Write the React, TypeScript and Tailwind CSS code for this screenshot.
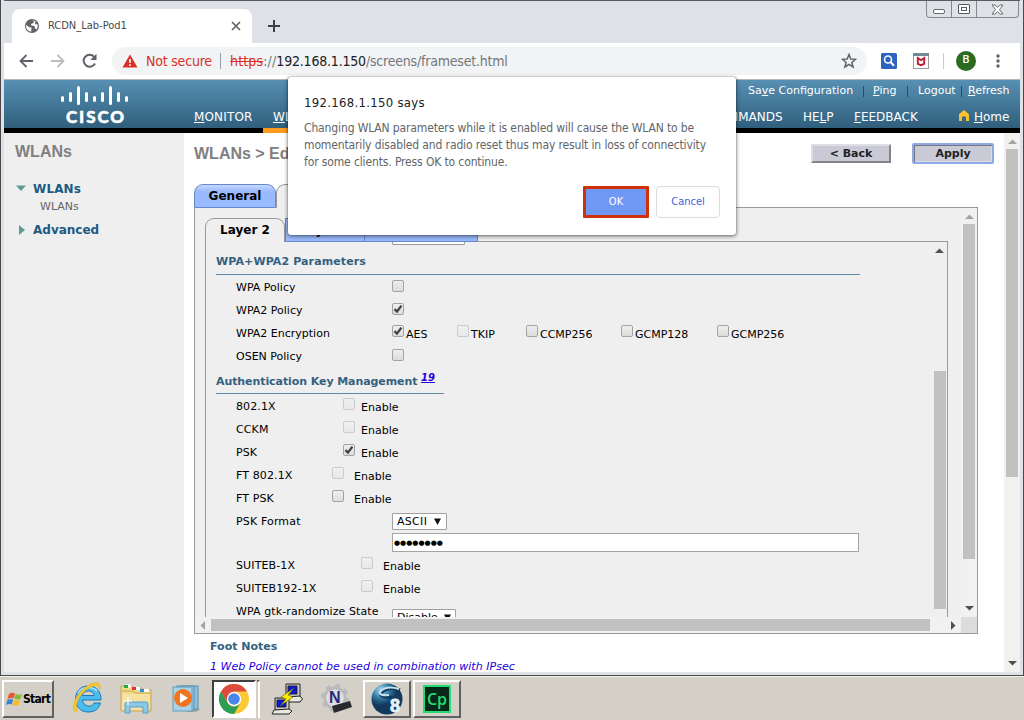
import React from "react";

const bars = [
  [61, 96, 6], [69, 92, 10], [77, 86, 19], [85, 92, 10], [93, 96, 6], [101, 92, 10], [109, 86, 19], [117, 92, 10], [125, 96, 6],
];

function Arrow({ dir, dark }: { dir: "up" | "down" | "left" | "right"; dark?: boolean }) {
  const points = {
    up: "0,6 4.5,1.5 9,6",
    down: "0,2 9,2 4.5,6.5",
    left: "6,0 1.5,4.5 6,9",
    right: "2,0 6.5,4.5 2,9",
  }[dir];
  return (
    <svg width="9" height="9" viewBox="0 0 9 9" className="block shrink-0">
      <polygon points={points} fill={dark ? "#505050" : "#a3a3a3"} />
    </svg>
  );
}

function Check({ on, off }: { on?: boolean; off?: boolean }) {
  return (
    <span
      className={
        "flex h-[12px] w-[12px] shrink-0 items-center justify-center rounded-[2px] border bg-linear-to-b " +
        (off ? "border-[#cbcbcb] from-[#f0f0f0] to-[#e8e8e8]" : "border-[#a3a3a3] from-[#eeeeee] to-[#dcdcdc]")
      }
    >
      {on && (
        <svg width="10" height="10" viewBox="0 0 10 10" className="shrink-0">
          <path d="M1.5 5.2 L4 7.6 L8.4 1.6" fill="none" stroke="#404040" strokeWidth="2.3" />
        </svg>
      )}
    </span>
  );
}

function PolicyRow({ label, on }: { label: string; on?: boolean }) {
  return (
    <div className="flex h-[23px] items-center pl-[20px]">
      <span className="w-[156px]">{label}</span>
      <span className="pb-[3px]"><Check on={on} /></span>
    </div>
  );
}

function Cipher({ label, on, off, width }: { label: string; on?: boolean; off?: boolean; width: string }) {
  return (
    <span className={"flex items-center " + width}>
      <span className="pb-[5px]"><Check on={on} off={off} /></span>
      <span className="pt-[2px] pl-[2px]">{label}</span>
    </span>
  );
}

function KeyRow({ label, on, off, col, gap }: { label: string; on?: boolean; off?: boolean; col: string; gap: string }) {
  return (
    <div className="flex h-[23px] items-center pl-[20px]">
      <span className={"tracking-[0.12px] whitespace-nowrap " + col}>{label}</span>
      <span className="pb-[6px]"><Check on={on} off={off} /></span>
      <span className={"pt-[2px] " + gap}>Enable</span>
    </div>
  );
}

function TabStrip() {
  return (
    <div className="flex h-[43px] shrink-0 border-t border-[#5a5a5e] bg-[#dee1e6] pl-[8px]">
      <div className="mt-[8px] flex h-[34px] w-[240px] items-center rounded-t-[8px] bg-white pr-[10px] pl-[13px]">
        <svg width="14" height="14" viewBox="0 0 14 14">
          <circle cx="7" cy="7" r="7" fill="#5f6368" />
          <path d="M1.2 6 L4.2 8.2 L6.5 8.6 L6.2 12.8 A5.7 5.7 0 0 1 1.2 6 Z M6 2 L9 1.8 L8.5 4 L6 5 L6.3 6.5 L9.5 7 L10 9.5 L11.5 10.4 A5.5 5.5 0 0 0 12.3 5 L10.5 5.4 L9.8 4 L11 3 L9.2 1.8 Z" fill="#fff" />
        </svg>
        <span className="mt-px ml-[9px] flex-1 font-['DejaVu_Sans_Condensed','DejaVu_Sans',sans-serif] text-[11px] text-[#45494d]">RCDN_Lab-Pod1</span>
        <svg width="12" height="12" viewBox="0 0 12 12"><path d="M2 2 L10 10 M10 2 L2 10" stroke="#5f6368" strokeWidth="1.7" /></svg>
      </div>
      <svg width="12" height="12" viewBox="0 0 12 12" className="mt-[19px] ml-[16px]"><path d="M6 0 V12 M0 6 H12" stroke="#3c4043" strokeWidth="2" /></svg>
      <div className="flex-1" />
      <div className="mr-[1px] flex h-[17px] w-[93px] rounded-b-[4px] border border-t-0 border-[#85888c]">
        <div className="flex w-[25px] items-center justify-center border-r border-[#85888c] pt-[4px]"><span className="h-[5px] w-[12px] rounded-[2px] border border-[#66696d] bg-white" /></div>
        <div className="flex w-[25px] items-center justify-center border-r border-[#85888c]"><span className="flex h-[10px] w-[12px] items-center justify-center rounded-[1px] border border-[#55585c] bg-white"><span className="h-[4px] w-[6px] border border-[#55585c]" /></span></div>
        <div className="flex flex-1 items-center justify-center">
          <svg width="13" height="11" viewBox="0 0 13 11"><path d="M1 1 H4.2 L6.5 3.4 L8.8 1 H12 L8.5 5.5 L12 10 H8.8 L6.5 7.6 L4.2 10 H1 L4.5 5.5 Z" fill="#fff" stroke="#66696d" strokeWidth="1" /></svg>
        </div>
      </div>
    </div>
  );
}

function Toolbar() {
  return (
    <div className="flex h-[37px] shrink-0 items-center border-b border-[#b6b4b6] bg-white pb-[1px] font-['DejaVu_Sans_Condensed','DejaVu_Sans',sans-serif] text-[14px]">
      <svg width="14" height="14" viewBox="0 0 14 14" className="ml-[15px]"><path d="M14 7 H1.5 M7.5 1 L1.5 7 L7.5 13" fill="none" stroke="#5f6368" strokeWidth="1.8" /></svg>
      <svg width="14" height="14" viewBox="0 0 14 14" className="ml-[18px]"><path d="M0 7 H12.5 M6.5 1 L12.5 7 L6.5 13" fill="none" stroke="#babcbe" strokeWidth="1.8" /></svg>
      <svg width="16" height="16" viewBox="0 0 16 16" className="ml-[17px]"><path d="M13 10.5 A6 6 0 1 1 12.2 3.8" fill="none" stroke="#5f6368" strokeWidth="2" /><path d="M14.5 0.8 V7 H8.3 Z" fill="#5f6368" /></svg>
      <div className="ml-[14px] flex h-[28px] w-[755px] items-center rounded-full bg-[#f1f3f4] pl-[10px]">
        <svg width="16" height="14" viewBox="0 0 16 14" className="shrink-0"><path d="M8 0.5 L15.5 13.5 H0.5 Z" fill="#d93025" /><path d="M8 5 V9 M8 10.3 V12" stroke="#fff" strokeWidth="1.6" /></svg>
        <span className="mt-px ml-[8px] w-[74px] whitespace-nowrap tracking-[-0.2px] text-[#d93025]">Not secure</span>
        <span className="h-[16px] w-px bg-[#9aa0a6]" />
        <span className="mt-px ml-[9px] flex-1 whitespace-nowrap tracking-[-0.2px] text-[#73777b]"><span className="tracking-[0.15px] text-[#d93025] line-through">https</span><span className="tracking-[0.15px]">://</span><span className="text-[#202124]">192.168.1.150</span>/screens/frameset.html</span>
        <svg width="16" height="16" viewBox="0 0 16 16" className="mr-[10px]"><path d="M8 1.5 L9.8 6 L14.6 6.3 L10.9 9.4 L12.1 14 L8 11.4 L3.9 14 L5.1 9.4 L1.4 6.3 L6.2 6 Z" fill="none" stroke="#5f6368" strokeWidth="1.5" /></svg>
      </div>
      <svg width="16" height="16" viewBox="0 0 16 16" className="ml-[14px]"><rect width="16" height="16" rx="1.5" fill="#2c62c0" /><circle cx="7" cy="6.5" r="3.5" fill="none" stroke="#fff" strokeWidth="1.6" /><path d="M9.5 9 L13 12.8" stroke="#fff" strokeWidth="2" /></svg>
      <svg width="16" height="16" viewBox="0 0 16 16" className="ml-[16px]"><rect x=".5" y=".5" width="15" height="15" fill="#fff" stroke="#959ba0" /><path d="M0 0 H16 V3 H0 Z" fill="#718a98" /><path d="M4.8 5 V10.8 L8 12.2 L11.2 10.8 V5 L8 7.2 Z" fill="none" stroke="#c01830" strokeWidth="1.9" /></svg>
      <span className="ml-[14px] h-[16px] w-px bg-[#c8cacc]" />
      <span className="ml-[12px] flex h-[20px] w-[20px] items-center justify-center rounded-full bg-[#2a6b22] font-['Roboto',sans-serif] text-[11px] font-medium text-white">B</span>
      <svg width="4" height="14" viewBox="0 0 4 14" className="ml-[20px]"><g fill="#5f6368"><circle cx="2" cy="2" r="1.7" /><circle cx="2" cy="7" r="1.7" /><circle cx="2" cy="12" r="1.7" /></g></svg>
    </div>
  );
}

function Header() {
  return (
    <>
      <div className="flex h-[48px] shrink-0 bg-linear-to-b from-[#5790b3] to-[#305f7c] text-[12px] text-white">
        <svg width="190" height="48" viewBox="4 80 190 48" className="shrink-0">
          {bars.map(([x, y, h]) => <rect key={x} x={x} y={y} width="3" height={h} rx="1.5" fill="#fff" />)}
          <text x="66" y="123" fontFamily="Lato, sans-serif" fontWeight="900" fontSize="17" textLength="58" fill="#fff" stroke="#fff" strokeWidth=".5">CISCO</text>
        </svg>
        <div className="flex items-end pb-[2px]">
          <span className="w-[79px] tracking-[0.15px]"><u>M</u>ONITOR</span>
          <span><u>W</u>LANs</span>
        </div>
        <div className="flex flex-1 flex-col items-end pr-[10px]">
          <div className="flex h-[22px] items-center pt-px text-[11px] whitespace-nowrap">
            <span className="w-[106px]">Sa<u>v</u>e Configuration</span>
            <span className="mr-[9px] ml-[9px] h-[11px] w-px bg-[#234b78]" />
            <span className="w-[25px]"><u>P</u>ing</span>
            <span className="mr-[10px] ml-[9px] h-[11px] w-px bg-[#234b78]" />
            <span className="w-[38px]">Logout</span>
            <span className="mr-[6px] ml-[5px] h-[11px] w-px bg-[#234b78]" />
            <span className="w-[42px]"><u>R</u>efresh</span>
          </div>
          <div className="mt-[6px] flex items-center whitespace-nowrap">
            <span className="w-[93px]">C<u>O</u>MMANDS</span>
            <span className="w-[51px]">HE<u>L</u>P</span>
            <span className="w-[105px]"><u>F</u>EEDBACK</span>
            <svg width="10" height="12" viewBox="0 0 10 12" className="mr-[5px] mb-[2px]"><path d="M0 11 V4.5 Q0 4 5 0 Q10 4 10 4.5 V11 H7 V7 Q5 5.4 3 7 V11 Z" fill="#fbc02d" /></svg>
            <span className="w-[36px]"><u>H</u>ome</span>
          </div>
        </div>
      </div>
      <div className="flex h-[5px] shrink-0 bg-black"><span className="ml-[259px] h-full w-[60px] bg-[#ff9a1e]" /></div>
    </>
  );
}

function Sidebar() {
  return (
    <div className="w-[180px] shrink-0 bg-[#efefef] pl-[11px]">
      <h2 className="mt-[9px] font-['Liberation_Sans',Arial,sans-serif] text-[16px] leading-[20px] font-bold text-[#808080]">WLANs</h2>
      <div className="mt-[16px] flex h-[20px] items-center text-[12px] font-bold text-[#1c5a83]">
        <svg width="12" height="8" viewBox="0 0 12 8"><path d="M1 1.5 H11 L6 7 Z" fill="#5f9a96" /></svg>
        <span className="mt-px ml-[6px] tracking-[0.15px]">WLANs</span>
      </div>
      <div className="flex h-[17px] items-center pt-px pl-[25px] text-[11px] text-[#666666]">WLANs</div>
      <div className="mt-[5px] flex h-[20px] items-center text-[12px] font-bold text-[#1c5a83]">
        <svg width="12" height="12" viewBox="0 0 12 12"><path d="M4 1 V11 L10 6 Z" fill="#5f9a96" /></svg>
        <span className="ml-[6px]">Advanced</span>
      </div>
    </div>
  );
}

function SecurityForm() {
  return (
    <div className="h-[375px] w-[726px] overflow-hidden pl-[10px] text-[11px] leading-[14px] text-black">
      <div className="ml-[176px] h-[3px] w-[73px] rounded-b-[2px] border border-t-0 border-[#999] bg-white" />
      <div className="mt-[6px] flex h-[24px] w-[644px] items-center border-b border-[#5e8ba6] pb-[2px] font-bold tracking-[0.12px] text-[#336180]">WPA+WPA2 Parameters</div>
      <div className="h-px" />
      <PolicyRow label="WPA Policy" />
      <PolicyRow label="WPA2 Policy" on />
      <div className="flex h-[23px] items-center pl-[20px] whitespace-nowrap">
        <span className="w-[156px]">WPA2 Encryption</span>
        <Cipher label="AES" on width="w-[65px]" />
        <Cipher label="TKIP" off width="w-[69px]" />
        <Cipher label="CCMP256" width="w-[95px]" />
        <Cipher label="GCMP128" width="w-[96px]" />
        <Cipher label="GCMP256" width="w-[90px]" />
      </div>
      <PolicyRow label="OSEN Policy" />
      <div className="flex h-[26px] w-[228px] items-center border-b border-[#5e8ba6] pt-[2px] font-bold whitespace-nowrap text-[#336180]">
        <span className="w-[205px] tracking-[-0.08px]">Authentication Key Management</span>
        <i className="pb-[7px] text-[10px] text-[#2200dd] underline">19</i>
      </div>
      <div className="h-px" />
      <KeyRow label="802.1X" off col="w-[107px]" gap="pl-[6px]" />
      <KeyRow label="CCKM" off col="w-[107px]" gap="pl-[6px]" />
      <KeyRow label="PSK" on col="w-[107px]" gap="pl-[6px]" />
      <KeyRow label="FT 802.1X" off col="w-[96px]" gap="pl-[10px]" />
      <KeyRow label="FT PSK" col="w-[96px]" gap="pl-[10px]" />
      <div className="flex h-[23px] items-center pl-[20px]">
        <span className="w-[156px] tracking-[0.15px]">PSK Format</span>
        <span className="flex h-[17px] w-[55px] items-center justify-between rounded-[1px] border border-[#a0a0a0] bg-white pr-[5px] pl-[4px] tracking-[0.3px]">
          ASCII
          <svg width="7" height="8" viewBox="0 0 7 8"><path d="M0 0.5 H7 L3.5 7 Z" fill="#111" /></svg>
        </span>
      </div>
      <div className="ml-[176px] flex h-[19px] w-[467px] items-center border border-[#a5a5a5] bg-white pl-[1px] text-[7px]">●●●●●●●●</div>
      <div className="h-[2px]" />
      <KeyRow label="SUITEB-1X" off col="w-[125px]" gap="pl-[10px]" />
      <KeyRow label="SUITEB192-1X" off col="w-[125px]" gap="pl-[10px]" />
      <div className="flex h-[30px] items-start pl-[20px]">
        <span className="w-[156px] pt-[5px] tracking-[0.1px] whitespace-nowrap">WPA gtk-randomize State</span>
        <span className="mt-[9px] flex h-[17px] w-[64px] items-center justify-between rounded-[1px] border border-[#a0a0a0] bg-white pr-[4px] pl-[4px]">
          Disable
          <svg width="7" height="8" viewBox="0 0 7 8"><path d="M0 0.5 H7 L3.5 7 Z" fill="#111" /></svg>
        </span>
      </div>
    </div>
  );
}

function MainPane() {
  return (
    <div className="flex w-[820px] shrink-0 flex-col bg-white pl-[10px]">
      <div className="flex h-[40px] shrink-0 items-center">
        <h1 className="mt-px flex-1 font-['Liberation_Sans',Arial,sans-serif] text-[16px] font-bold text-[#808080]">WLANs &gt; Edit</h1>
        <span className="mt-[1px] flex h-[19px] w-[80px] items-center justify-center border-2 border-t-[#dedee4] border-r-[#84848a] border-b-[#84848a] border-l-[#dedee4] bg-[#cacad6] pt-px text-[11px] font-bold text-[#222]">&lt; Back</span>
        <span className="mt-[1px] mr-[10px] ml-[21px] flex h-[21px] w-[82px] items-center justify-center rounded-[2px] border-2 border-[#8fa9e8] bg-[#cacad6] pt-px text-[11px] font-bold text-[#222] shadow-[inset_1px_1px_0_#777,inset_-1px_-1px_0_#dedee4]">Apply</span>
      </div>
      <div className="mt-[11px] flex h-[24px] shrink-0">
        <span className="flex w-[82px] items-center justify-center rounded-t-[9px] border border-[#6488cc] bg-linear-to-b from-[#c5d8ff] via-[#9abaff] via-30% to-[#9abaff] text-[12px] font-bold text-black">General</span>
        <span className="w-[84px] rounded-t-[9px] border border-b-0 border-[#999] bg-[#efefef]" />
        <span className="mr-[26px] flex-1 border-b border-[#999]" />
      </div>
      <div className="flex h-[426px] w-[784px] shrink-0 flex-col border border-t-0 border-[#999] bg-[#efefef]">
        <div className="flex h-[409px]">
          <div className="flex w-[766px] flex-col pl-[10px]">
            <div className="mt-[10px] flex h-[24px] w-[743px] text-[12px] font-bold text-black">
              <span className="flex w-[80px] items-center justify-center rounded-t-[9px] border border-b-0 border-[#999] pb-px">Layer 2</span>
              <span className="flex w-[80px] items-center justify-center border border-[#6488cc] bg-[#9abaff]">Layer 3</span>
              <span className="flex w-[113px] items-center justify-center border border-l-0 border-[#6488cc] bg-[#9abaff] text-[11px]">AAA Servers</span>
              <span className="flex-1 border-b border-[#999]" />
            </div>
            <div className="flex w-[743px] flex-1 border-x border-[#999]">
              <SecurityForm />
              <div className="flex w-[15px] flex-col items-center pt-[5px]">
                <Arrow dir="up" dark />
                <span className="mt-[115px] h-[238px] w-[12px] bg-[#c1c1c1]" />
              </div>
            </div>
          </div>
          <div className="flex w-[16px] shrink-0 flex-col items-center bg-[#f1f1f1] pt-[5px]">
            <Arrow dir="up" />
            <span className="mt-[2px] mb-[45px] h-[335px] w-[12px] shrink-0 bg-[#c1c1c1]" />
            <Arrow dir="down" dark />
          </div>
        </div>
        <div className="flex h-[16px] items-center bg-[#f1f1f1]">
          <span className="w-[16px] pl-[4px]"><Arrow dir="left" /></span>
          <span className="h-[12px] w-[719px] bg-[#c1c1c1]" />
          <span className="flex w-[31px] justify-end pr-[3px]"><Arrow dir="right" dark /></span>
          <span className="h-full w-[16px] bg-[#dcdcdc]" />
        </div>
      </div>
      <div className="mt-[6px] pl-[16px] text-[11px] leading-[14px] font-bold text-[#336180]">Foot Notes</div>
      <div className="mt-[6px] pl-[16px] text-[11px] leading-[14px] tracking-[0.03px] text-[#2200dd] italic">1 Web Policy cannot be used in combination with IPsec</div>
    </div>
  );
}

function Dialog() {
  return (
    <div className="absolute top-[77px] left-[288px] h-[158px] w-[448px] rounded-[3px] bg-white px-[16px] pt-[17px] font-['DejaVu_Sans_Condensed','DejaVu_Sans',sans-serif] shadow-[0_1px_4px_rgba(0,0,0,0.6),0_0_1px_rgba(0,0,0,0.6)]">
      <div className="text-[13px] leading-[18px] tracking-[0.3px] text-[#202124]">192.168.1.150 says</div>
      <p className="mt-[7px] pt-px text-[12px] leading-[17px] tracking-[-0.13px] whitespace-nowrap text-[#62666a]">
        Changing WLAN parameters while it is enabled will cause the WLAN to be<br />momentarily disabled and radio reset thus may result in loss of connectivity<br />for some clients. Press OK to continue.
      </p>
      <div className="mt-[15px] flex justify-end gap-[7px] text-[11px]">
        <span className="flex h-[32px] w-[66px] items-center justify-center rounded-[1px] border-3 border-[#cf3208] bg-[#6f98f4] text-white">OK</span>
        <span className="flex h-[32px] w-[64px] items-center justify-center rounded-[4px] border border-[#dadce0] text-[#3d62dd]">Cancel</span>
      </div>
    </div>
  );
}

const raised = "flex items-center justify-center border-2 border-t-white border-l-white border-r-[#606060] border-b-[#606060]";

function Taskbar() {
  return (
    <div className="flex h-[44px] shrink-0 items-start border-t border-[#f6f4ee] bg-[#d4d0c8] pt-[3px] pl-[2px]">
      <div className={raised + " h-[38px] w-[52px]"}>
        <svg width="17" height="15" viewBox="0 0 17 15" className="shrink-0">
          <path d="M3 2 Q6 0 9 1.5 L7.5 6.5 Q5 5.5 1.5 7 Z" fill="#e8572b" /><path d="M9.6 2 Q12.5 3.5 16 2 L14.5 7 Q11.5 8 8.2 6.8 Z" fill="#86b83c" /><path d="M1.2 8 Q4.5 6.5 7.2 7.5 L5.7 12.5 Q3 11.5 0 13 Z" fill="#3f83d0" /><path d="M8 7.8 Q11 9.3 14.2 8 L12.8 13 Q9.5 14.5 6.5 13 Z" fill="#f8bd24" />
        </svg>
        <span className="font-['DejaVu_Sans_Condensed','DejaVu_Sans',sans-serif] text-[12px] font-bold tracking-[-0.7px] text-black">Start</span>
      </div>
      <svg width="32" height="33" viewBox="0 0 32 33" className="mt-[1px] ml-[17px]">
        <path fillRule="evenodd" d="M17 5 C25.5 5 30.5 11 30 19 H11.5 C12 26 21.5 27 23 22 H29.5 C27.5 29 22.5 31 17 31 C9.500 31 4.500 25.500 4.500 18 C4.500 10.500 9.500 5 17 5 Z M11.500 14.500 H23 C22.800 8.500 12 8.500 11.500 14.500 Z" fill="#4bbcec" stroke="#1b79b8" strokeWidth="1" />
        <path d="M7 12 Q10 6.500 17 6.500 Q23 6.500 26 10" fill="none" stroke="#a7e4fb" strokeWidth="1.5" />
        <path d="M4 31 C-2 25 8 8 20 3 C28 0 31 3 28.500 9 C28.500 4 25 4 20 6 C10 11 3 22 6 30 Z" fill="#f6c72f" stroke="#dfa51c" strokeWidth=".5" />
      </svg>
      <svg width="32" height="32" viewBox="0 0 32 32" className="mt-[3px] ml-[17px]">
        <path d="M1 3 H12 L14 5 H22 L24 7 H31 V28 H1 Z" fill="#f2d98b" stroke="#c7a352" /><path d="M2 8 H13 L15 10 H30" fill="none" stroke="#c9a64f" /><rect x="5" y="1.500" width="6" height="3" fill="#fff" /><rect x="4" y="2" width="4" height="3" fill="#25a93b" /><rect x="13" y="4" width="7" height="3" fill="#fff" /><rect x="12" y="4" width="4" height="3" fill="#d8382a" /><rect x="21" y="6" width="8" height="3" fill="#fff" /><rect x="20" y="6" width="4" height="3" fill="#2e90dc" /><path d="M2 11 H30 V27 H2 Z" fill="#f5e2a2" />
        <path d="M5 30 V21 Q5 19 7 19 H26 Q28 19 28 21 V30 H23 V24 H10 V30 Z" fill="#8ac8e8" stroke="#5c9fc6" /><path d="M8 14 V22 M4 18 H12" stroke="#fff" strokeWidth="1.200" />
      </svg>
      <svg width="30" height="28" viewBox="0 0 30 28" className="mt-[5px] ml-[20px]">
        <path d="M18 24 L29 24 L24 27 H14 Z" fill="#aaa79f" /><rect x="9" y="1" width="17" height="23" fill="#91c1dc" stroke="#538eb0" /><rect x="5" y="1" width="17" height="24" fill="#9bcbe4" stroke="#538eb0" /><rect x="1" y="2" width="19" height="24" fill="#a7d3e9" stroke="#659bb8" /><circle cx="11" cy="13" r="9" fill="#f27420" /><path d="M8 8 L16 13 L8 18 Z" fill="#fff" />
      </svg>
      <div className="ml-[10px] flex h-[38px] w-[44px] items-center justify-center border-2 border-t-[#404040] border-r-white border-b-white border-l-[#404040] bg-white">
        <svg width="30" height="30" viewBox="0 0 30 30">
          <circle cx="15" cy="15" r="15" fill="#fcc934" /><path d="M2 7.5 A15 15 0 0 1 28 7.5 L15 7.5 L8.5 18.8 Z" fill="#dd4b3e" /><path d="M2 7.5 A15 15 0 0 0 15 30 L21.5 18.7 A7.5 7.5 0 0 1 8.5 18.8 Z" fill="#2c9d58" /><circle cx="15" cy="15" r="7.2" fill="#fff" /><circle cx="15" cy="15" r="5.8" fill="#4886ec" />
        </svg>
      </div>
      <span className="ml-[1px] h-[38px] w-[3px] border-t-2 border-r-2 border-t-[#606060] border-r-white" />
      <svg width="32" height="32" viewBox="0 0 32 32" className="mt-[3px] ml-[11px]">
        <g stroke="#222" strokeWidth="1"><path d="M15 1 H29 V14 H15 Z" fill="#ccc" /><path d="M17 3 H26 V11 H17 Z" fill="#0817d8" /><path d="M15 14 L29 13 L31.5 16 L29 19 H13 Z" fill="#e8e8df" /><path d="M4 15 H18 V27 H4 Z" fill="#ccc" /><path d="M6 17 H15 V24 H6 Z" fill="#0817d8" /><path d="M3 27 L18 26 L21 28 L18 31 H1 Z" fill="#e8e8df" /></g>
        <path d="M23 5 L10 14 L15 16 L9 23 L22 14 L17 12 Z" fill="#ffed00" stroke="#605800" strokeWidth=".6" />
      </svg>
      <svg width="32" height="32" viewBox="0 0 32 32" className="mt-[3px] ml-[18px]">
        <circle cx="14" cy="15" r="11.5" fill="#b9babc" /><circle cx="14" cy="15" r="12.5" fill="none" stroke="#b9babc" strokeWidth="3" strokeDasharray="5 4.8" /><circle cx="14" cy="15" r="8.8" fill="#dedede" />
        <text x="8" y="20" fontFamily="Liberation Sans, sans-serif" fontSize="16" fontWeight="700" fill="#232a80">N</text><path d="M11 23 L29 18 L31 24 L13 30 Z" fill="#272b2f" />
      </svg>
      <div className={raised + " ml-[10px] h-[38px] w-[48px]"}>
        <svg width="33" height="33" viewBox="0 0 33 33">
          <defs><radialGradient id="globe" cx=".3" cy=".2"><stop stopColor="#a3d6ef" /><stop offset=".55" stopColor="#347ba4" /><stop offset="1" stopColor="#133a5d" /></radialGradient></defs>
          <circle cx="16" cy="16" r="15.5" fill="url(#globe)" /><path d="M29 7 Q18 3 10 10 Q9 15 19 14 Q26 16 18 24 Q13 28 5 26" fill="none" stroke="#123a5d" strokeWidth="3" /><path d="M28 6 Q15 2 9 9 Q8 13 18 12" fill="none" stroke="#c4e2f0" strokeWidth="2" /><text x="19" y="29" fontFamily="Liberation Sans, sans-serif" fontSize="18" fontWeight="700" fill="#e4f3fb" stroke="#e4f3fb" strokeWidth=".8">8</text>
        </svg>
      </div>
      <div className={raised + " ml-[2px] h-[38px] w-[48px]"}>
        <span className="flex h-[28px] w-[28px] items-center justify-center border-2 border-[#22dd72] bg-[#07281b] font-['Open_Sans',sans-serif] text-[16px] font-semibold text-[#23dc74]">Cp</span>
      </div>
    </div>
  );
}

export default function App() {
  return (
    <div className="relative flex h-[720px] w-[1024px] flex-col overflow-hidden bg-[#d4d0c8] font-['DejaVu_Sans',Verdana,sans-serif]">
      <div className="flex h-[676px] shrink-0 flex-col overflow-hidden border-r border-b border-l border-[#4a484c] bg-[#dee1e6] pr-[3px] pb-[3px] pl-[3px]">
        <TabStrip />
        <Toolbar />
        <Header />
        <div className="flex min-h-0 flex-1 overflow-hidden">
          <Sidebar />
          <MainPane />
          <div className="flex w-[16px] shrink-0 flex-col items-center bg-[#f1f1f1] pt-[5px]">
            <Arrow dir="up" />
            <span className="mt-[2px] mb-[182px] h-[328px] w-[12px] shrink-0 bg-[#c1c1c1]" />
            <Arrow dir="down" dark />
          </div>
        </div>
      </div>
      <Taskbar />
      <Dialog />
    </div>
  );
}
